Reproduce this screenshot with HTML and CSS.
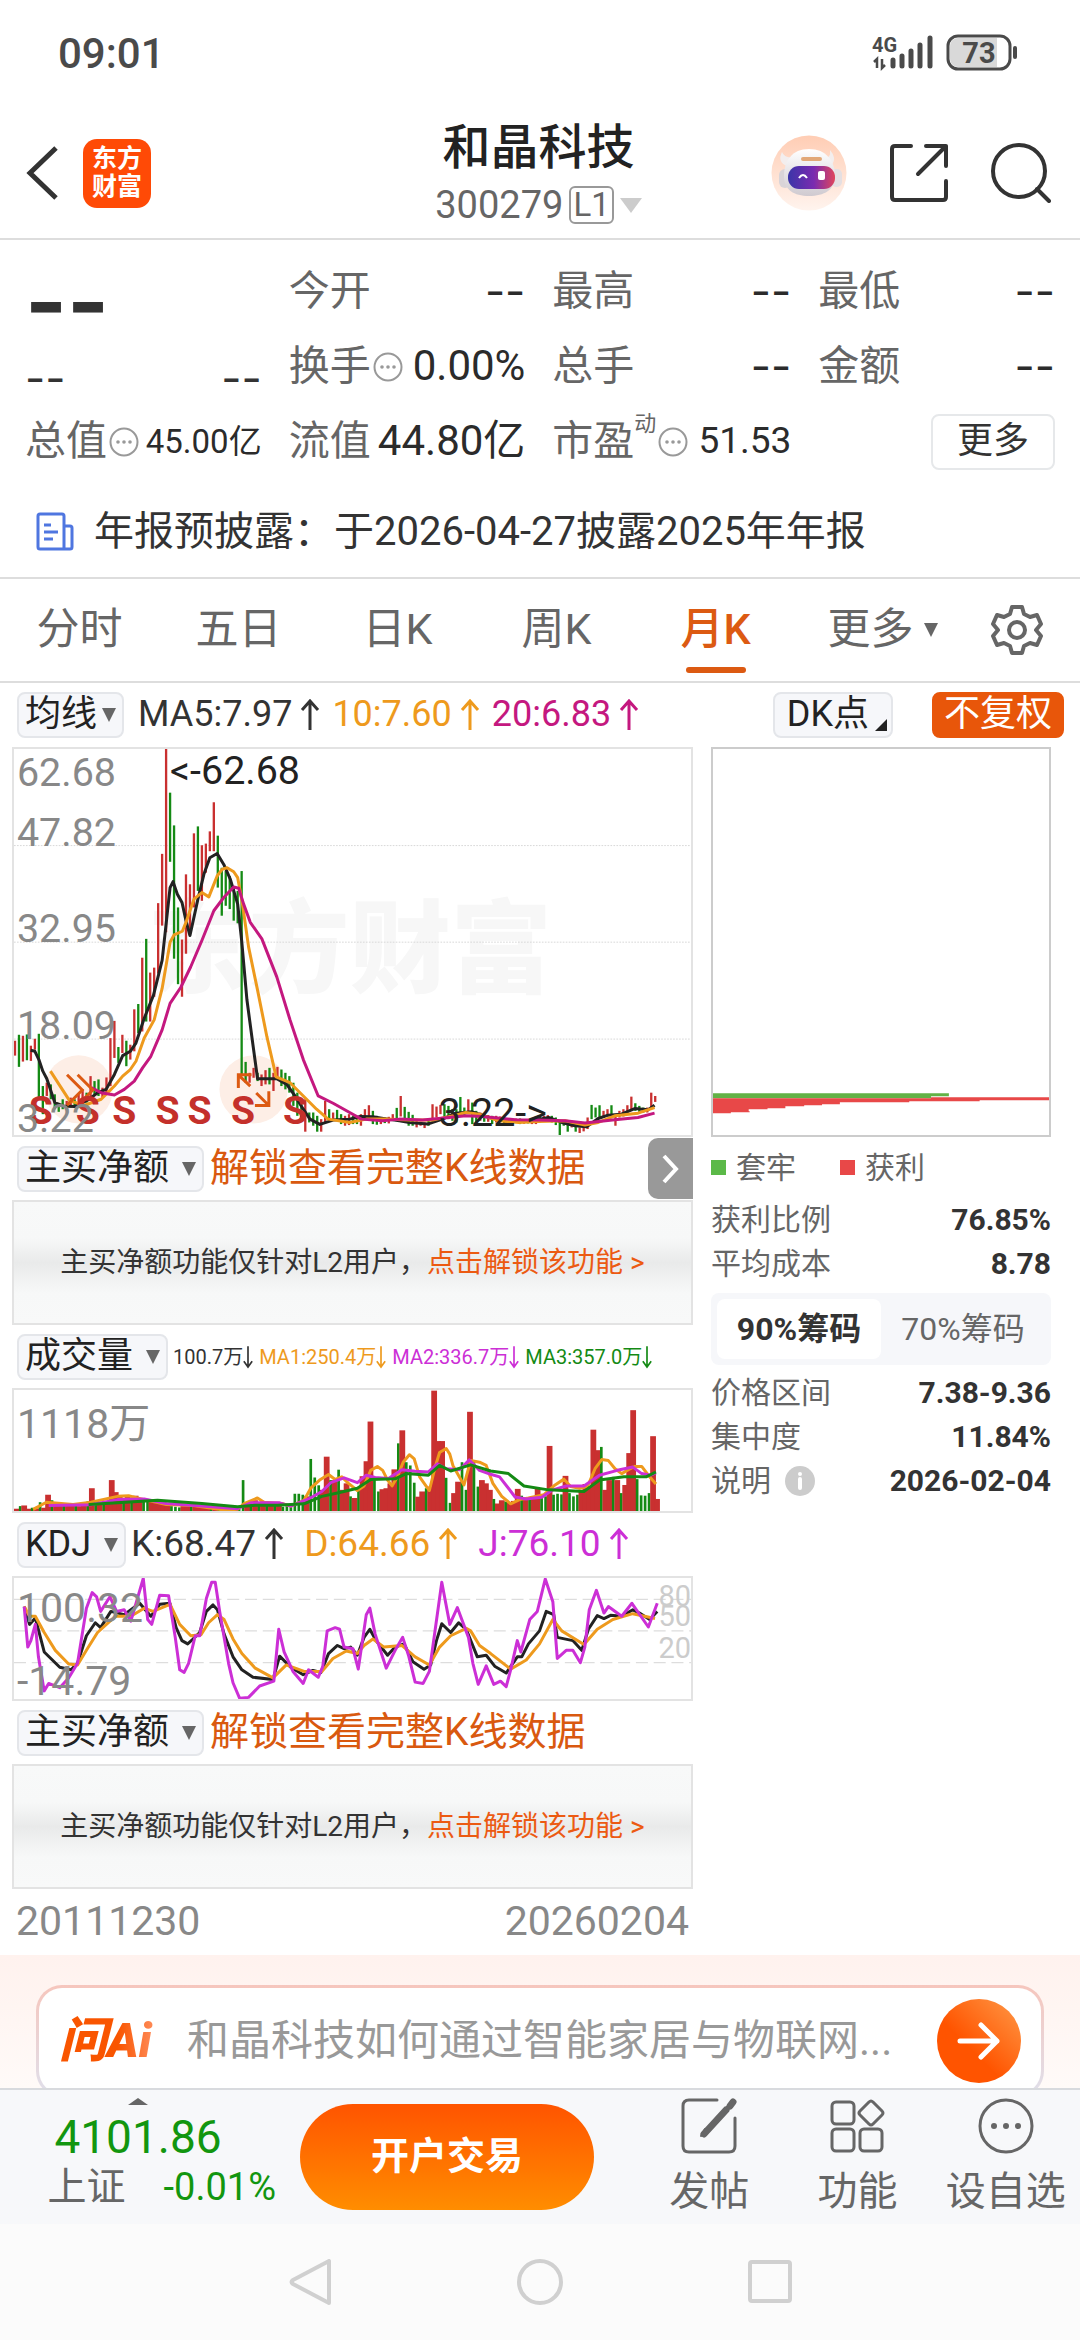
FILE: index.html
```html
<!DOCTYPE html>
<html lang="zh-CN">
<head>
    <meta charset="UTF-8">
    <meta name="viewport" content="width=device-width, initial-scale=1.0">
    <title>和晶科技 300279</title>
    <link rel="stylesheet" href="styles.css">
</head>
<body>
    <div class="statusbar">
        <span class="clock">09:01</span>
        <svg class="status-icons" width="150" height="40" viewBox="0 0 150 40">
            <text x="0" y="18" class="net">4G</text>
            <path d="M5 34V25l-3 3M10 25v9l3-3" fill="none" stroke="#4a4a4a" stroke-width="2.5"/>
            <path d="M21 32v-6M30 32v-10M39 32V17M48 32V11M58 32V4" stroke="#4a4a4a" stroke-width="5" stroke-linecap="round"/>
            <rect x="76" y="2" width="62" height="33" rx="10" fill="#fff" stroke="#4a4a4a" stroke-width="3"/>
            <path d="M86 4h39v29H86a8 8 0 0 1-8-8V12a8 8 0 0 1 8-8z" fill="#d9d9d9"/>
            <path d="M143 14v9" stroke="#4a4a4a" stroke-width="4" stroke-linecap="round"/>
            <text x="107" y="29" text-anchor="middle" class="bat">73</text>
        </svg>
    </div>

    <header class="header">
        <div class="header-left">
            <button class="icon-btn" aria-label="返回">
                <svg width="34" height="58" viewBox="0 0 34 58"><path d="M30 4L4 29l26 25" fill="none" stroke="#333" stroke-width="5"/></svg>
            </button>
            <div class="brand">东方<br>财富</div>
        </div>
        <div class="header-title">
            <h1>和晶科技</h1>
            <div class="code">300279<span class="level">L1</span><span class="tri tri-lg"></span></div>
        </div>
        <div class="header-right">
            <button class="icon-btn" aria-label="智能助手">
                <svg width="76" height="76" viewBox="0 0 76 76">
                    <defs>
                        <linearGradient id="halo" x1="0" y1="0" x2="0" y2="1"><stop offset="0" stop-color="#ffcdb4"/><stop offset="1" stop-color="#fff4ee"/></linearGradient>
                        <linearGradient id="visor" x1="0" y1="0" x2="1" y2="0"><stop offset="0" stop-color="#3b35a8"/><stop offset=".55" stop-color="#7a2bb0"/><stop offset="1" stop-color="#e0455c"/></linearGradient>
                        <linearGradient id="shell" x1="0" y1="0" x2="0" y2="1"><stop offset="0" stop-color="#fff"/><stop offset="1" stop-color="#cfcad0"/></linearGradient>
                    </defs>
                    <circle cx="38" cy="38" r="37.500" fill="url(#halo)"/>
                    <path d="M11 17q-5 10 5 14l7-9q-9 2-12-5zM59 15q7 8 2 15l-7-7q6 0 5-8z" fill="#f3eeee"/>
                    <rect x="8" y="34" width="12" height="19" rx="6" fill="#d9d4d8"/><rect x="60" y="34" width="11" height="18" rx="5" fill="#e4dfe2"/>
                    <path d="M38 14c17 0 26 12 26 27 0 14-11 20-26 20S13 55 13 41c0-15 8-27 25-27z" fill="url(#shell)"/>
                    <rect x="30" y="22" width="21" height="4" rx="2" fill="#e2a878"/>
                    <rect x="17" y="31" width="47" height="23" rx="11" fill="url(#visor)"/>
                    <path d="M28 43q4-6 8 0" fill="none" stroke="#fff" stroke-width="2"/>
                    <rect x="47" y="36" width="7" height="9" rx="2" fill="#fff"/>
                </svg>
            </button>
            <button class="icon-btn" aria-label="分享">
                <svg width="60" height="60" viewBox="0 0 60 60" fill="none" stroke="#333" stroke-width="4" stroke-linecap="round" stroke-linejoin="round"><path d="M22 3H6q-3 0-3 3v48q0 3 3 3h48q3 0 3-3V38M37 3h20v20M57 3L29 31"/></svg>
            </button>
            <button class="icon-btn" aria-label="搜索">
                <svg width="60" height="60" viewBox="0 0 60 60" fill="none" stroke="#333" stroke-width="4" stroke-linecap="round"><circle cx="28" cy="28" r="26"/><path d="M46 46l12 12"/></svg>
            </button>
        </div>
    </header>

    <section class="quote">
        <div class="quote-grid">
            <div class="cell price"><span class="dash">--</span></div>
            <div class="cell"><span class="k">今开</span><span class="v dash">--</span></div>
            <div class="cell"><span class="k">最高</span><span class="v dash">--</span></div>
            <div class="cell"><span class="k">最低</span><span class="v dash">--</span></div>

            <div class="cell change"><span class="dash">--</span><span class="dash">--</span></div>
            <div class="cell"><span class="k">换手</span><svg class="more-dot"><use href="#dots"/></svg><span class="v">0.00%</span></div>
            <div class="cell"><span class="k">总手</span><span class="v dash">--</span></div>
            <div class="cell"><span class="k">金额</span><span class="v dash">--</span></div>

            <div class="cell"><span class="k">总值</span><svg class="more-dot"><use href="#dots"/></svg><span class="v v-sm">45.00亿</span></div>
            <div class="cell"><span class="k">流值</span><span class="v">44.80亿</span></div>
            <div class="cell"><span class="k">市盈<sup>动</sup></span><svg class="more-dot"><use href="#dots"/></svg><span class="v v-md">51.53</span></div>
            <div class="cell cell-end"><button class="more-btn">更多</button></div>
        </div>
        <a class="notice" href="#">
            <svg width="38" height="40" viewBox="0 0 38 40" fill="none" stroke="#4f76e0" stroke-width="3" stroke-linejoin="round"><path d="M28 37H4q-2 0-2-2V4q0-2 2-2h22q2 0 2 2zM28 14h6q2 0 2 2v19q0 2-2 2h-6zM8 13h7M8 20h14M8 27h9"/></svg>
            <span>年报预披露：于2026-04-27披露2025年年报</span>
        </a>
    </section>

    <nav class="tabs">
        <button>分时</button>
        <button>五日</button>
        <button>日K</button>
        <button>周K</button>
        <button class="active">月K</button>
        <button>更多<span class="tri"></span></button>
        <button aria-label="设置">
            <svg width="52" height="52" viewBox="0 0 52 52" fill="none" stroke="#666" stroke-width="4" stroke-linejoin="round"><path d="M21 3h10l2 7 6 3 7-2 4 9-5 6 5 6-4 9-7-2-6 3-2 7H21l-2-7-6-3-7 2-4-9 5-6-5-6 4-9 7 2 6-3z"/><circle cx="26" cy="26" r="8"/></svg>
        </button>
    </nav>

    <div class="toolbar">
        <label class="picker"><select aria-label="主图指标"><option>均线</option></select><span class="tri"></span></label>
        <div class="legend">
            <span>MA5:7.97<svg class="arr"><use href="#up"/></svg></span>
            <span class="c-orange">10:7.60<svg class="arr"><use href="#up"/></svg></span>
            <span class="c-pink">20:6.83<svg class="arr"><use href="#up"/></svg></span>
        </div>
        <button class="chip">DK点<span class="corner"></span></button>
        <button class="chip chip-on">不复权</button>
    </div>

    <main class="charts">
        <div class="chart-col">
            <div class="plot plot-main">
                <svg id="kline" viewBox="37 21 2043 1167" preserveAspectRatio="none">
                    <text x="440" y="735" class="watermark">东方财富</text>
                    <g class="grid"><path d="M37 313H2080M37 605H2080M37 898H2080"/></g>
                    <circle cx="232" cy="1050" r="103" fill="#fdeee6"/>
                    <circle cx="760" cy="1050" r="103" fill="#fdeee6"/>
                    <g id="candles"></g>
                    <g id="maLines"></g>
                    <g class="signal">
                        <path d="M197 1006l46 46-46 46M229 1006l46 46-46 46"/>
                        <path d="M714 1046v-40h40M714 1006l36 34M806 1056v43h-42M806 1099l-38-38"/>
                    </g>
                    <g class="sell">
                        <text x="118" y="1154">S</text><text x="260" y="1154">S</text><text x="370" y="1154">S</text>
                        <text x="500" y="1154">S</text><text x="597" y="1154">S</text><text x="728" y="1154">S</text><text x="885" y="1154">S</text>
                    </g>
                    <g class="axis">
                        <text x="46" y="134">62.68</text><text x="46" y="315">47.82</text><text x="46" y="605">32.95</text>
                        <text x="46" y="899">18.09</text><text x="46" y="1178">3.22</text>
                    </g>
                    <g class="mark"><text x="508" y="128">&lt;-62.68</text><text x="1318" y="1162">3.22-&gt;</text></g>
                </svg>
            </div>
            <div class="row">
                <label class="picker"><select aria-label="副图一指标"><option>主买净额</option></select><span class="tri"></span></label>
                <a class="unlock" href="#">解锁查看完整K线数据</a>
                <button class="expand" aria-label="收起筹码"><svg width="20" height="32" viewBox="0 0 20 32"><path d="M3 3l12 13L3 29" fill="none" stroke="#fff" stroke-width="4"/></svg></button>
            </div>
            <div class="plot locked">主买净额功能仅针对L2用户，<a href="#">点击解锁该功能 &gt;</a></div>
            <div class="row">
                <label class="picker"><select aria-label="副图二指标"><option>成交量</option></select><span class="tri"></span></label>
                <div class="legend legend-vol">
                    <span>100.7万<svg class="arr"><use href="#down"/></svg></span>
                    <span class="c-orange">MA1:250.4万<svg class="arr"><use href="#down"/></svg></span>
                    <span class="c-magenta">MA2:336.7万<svg class="arr"><use href="#down"/></svg></span>
                    <span class="c-green">MA3:357.0万<svg class="arr"><use href="#down"/></svg></span>
                </div>
            </div>
            <div class="plot plot-sub">
                <svg id="volume" viewBox="27 23 1524 372" preserveAspectRatio="none">
                    <g id="volBars"></g>
                    <g id="volLines"></g>
                </svg>
                <span class="tag tag-vol">1118万</span>
            </div>
            <div class="row">
                <label class="picker"><select aria-label="副图三指标"><option>KDJ</option></select><span class="tri"></span></label>
                <div class="legend legend-kdj">
                    <span>K:68.47<svg class="arr"><use href="#up"/></svg></span>
                    <span class="c-orange">D:64.66<svg class="arr"><use href="#up"/></svg></span>
                    <span class="c-magenta">J:76.10<svg class="arr"><use href="#up"/></svg></span>
                </div>
            </div>
            <div class="plot plot-sub">
                <svg id="kdj" viewBox="27 587 1524 373" preserveAspectRatio="none">
                    <g class="grid-dash"><path d="M27 653H1551M27 750H1551M27 848H1551"/></g>
                    <g id="kdjLines"></g>
                </svg>
                <span class="tag tag-hi">100.32</span>
                <span class="tag tag-lo">-14.79</span>
                <div class="levels"><span>80</span><span>50</span><span>20</span></div>
            </div>
            <div class="row">
                <label class="picker"><select aria-label="副图四指标"><option>主买净额</option></select><span class="tri"></span></label>
                <a class="unlock" href="#">解锁查看完整K线数据</a>
            </div>
            <div class="plot locked">主买净额功能仅针对L2用户，<a href="#">点击解锁该功能 &gt;</a></div>
            <div class="dates"><span>20111230</span><span>20260204</span></div>
        </div>

        <aside class="chips">
            <div class="plot plot-chips">
                <svg viewBox="0 0 339 389" preserveAspectRatio="none">
                    <path d="M0 347h238v3h-18v2H0z" fill="#62b246"/>
                    <path d="M0 352h220v-1h119v3h-70v1h-71v1h-70v2h-18v1h-18v1h-19v2h-18v1h-19v2H37v1H18v1H0z" fill="#e84848"/>
                </svg>
            </div>
            <div class="chips-legend"><span><i class="sq sq-green"></i>套牢</span><span><i class="sq sq-red"></i>获利</span></div>
            <dl>
                <div><dt>获利比例</dt><dd>76.85%</dd></div>
                <div><dt>平均成本</dt><dd>8.78</dd></div>
            </dl>
            <div class="segment"><button class="on">90%筹码</button><button>70%筹码</button></div>
            <dl>
                <div><dt>价格区间</dt><dd>7.38-9.36</dd></div>
                <div><dt>集中度</dt><dd>11.84%</dd></div>
                <div><dt>说明<svg width="30" height="30" viewBox="0 0 30 30"><circle cx="15" cy="15" r="15" fill="#ccc"/><path d="M15 13v9" stroke="#fff" stroke-width="4" stroke-linecap="round"/><circle cx="15" cy="8" r="2" fill="#fff"/></svg></dt><dd>2026-02-04</dd></div>
            </dl>
        </aside>
    </main>

    <section class="ask">
        <form class="ask-card">
            <label class="ask-logo" for="ask">问Ai</label>
            <input id="ask" type="text" placeholder="和晶科技如何通过智能家居与物联网...">
            <button class="ask-go" type="button" aria-label="提问">
                <svg width="44" height="40" viewBox="0 0 44 40" fill="none" stroke="#fff" stroke-width="5" stroke-linecap="round" stroke-linejoin="round"><path d="M3 20h37M24 4l16 16-16 16"/></svg>
            </button>
        </form>
    </section>

    <footer class="bottombar">
        <div class="index">
            <span class="tri-up"></span>
            <span class="index-val">4101.86</span>
            <span class="index-name">上证<b>-0.01%</b></span>
        </div>
        <button class="trade">开户交易</button>
        <button class="action">
            <svg width="56" height="56" viewBox="0 0 56 56" fill="none" stroke="#666" stroke-width="3" stroke-linecap="round"><path d="M36 2H8q-6 0-6 6v40q0 6 6 6h40q6 0 6-6V20"/><path d="M23 36l22-24M49 8l3-4" stroke-width="7"/><path d="M20 38l4-7" stroke-width="2"/></svg>
            发帖
        </button>
        <button class="action">
            <svg width="56" height="56" viewBox="0 0 56 56" fill="none" stroke="#666" stroke-width="3"><rect x="3" y="4" width="22" height="22" rx="4"/><rect x="3" y="31" width="22" height="22" rx="4"/><rect x="31" y="31" width="22" height="22" rx="4"/><path d="M40 4q2-2 4 0l9 9q2 2 0 4l-9 9q-2 2-4 0l-9-9q-2-2 0-4z"/></svg>
            功能
        </button>
        <button class="action">
            <svg width="56" height="56" viewBox="0 0 56 56"><circle cx="28" cy="28" r="26" fill="none" stroke="#666" stroke-width="3"/><g fill="#666"><circle cx="16" cy="28" r="3"/><circle cx="28" cy="28" r="3"/><circle cx="40" cy="28" r="3"/></g></svg>
            设自选
        </button>
    </footer>

    <div class="sysnav">
        <svg width="44" height="46" viewBox="0 0 44 46"><path d="M41 2v42L5 25q-3-2 0-4z"/></svg>
        <svg width="46" height="46" viewBox="0 0 46 46"><circle cx="23" cy="23" r="21"/></svg>
        <svg width="44" height="46" viewBox="0 0 44 46"><rect x="2" y="3" width="40" height="39" rx="2"/></svg>
    </div>

    <svg width="0" height="0" class="defs">
        <symbol id="dots" viewBox="0 0 30 30"><circle cx="15" cy="15" r="13.500" fill="none" stroke="#999" stroke-width="2"/><g fill="#999"><circle cx="9" cy="15" r="1.800"/><circle cx="15" cy="15" r="1.800"/><circle cx="21" cy="15" r="1.800"/></g></symbol>
        <symbol id="up" viewBox="0 0 20 32"><path d="M10 31V2M2 11l8-9 8 9" fill="none" stroke="currentColor" stroke-width="3"/></symbol>
        <symbol id="down" viewBox="0 0 12 28"><path d="M6 1v25M1 19l5 7 5-7" fill="none" stroke="currentColor" stroke-width="2"/></symbol>
    </svg>

    <script src="chart.js"></script>
</body>
</html>
```

FILE: styles.css
```css
* { box-sizing: border-box; }
body {
    margin: 0;
    min-height: 100vh;
    display: flex;
    flex-direction: column;
    background: #fff;
    color: #333;
    font-family: Roboto, "Noto Sans CJK SC", sans-serif;
    font-size: 36px;
    line-height: 1.2;
}
button, input, select { font: inherit; color: inherit; border: 0; background: none; padding: 0; margin: 0; }
a { color: inherit; text-decoration: none; }
svg { display: block; flex: none; }
.defs { position: absolute; }
.c-orange { color: #ee9a1d; }
.c-pink { color: #c4187f; }
.c-magenta { color: #cc2fd6; }
.c-green { color: #148a14; }
.dash { font-family: Inter, sans-serif; }
.arr { width: 20px; height: 32px; }
.tri { display: inline-block; border: 7px solid transparent; border-top: 14px solid #666; border-bottom: 0; }
.tri-lg { border-width: 11px; border-top: 15px solid #ccc; border-bottom: 0; }

/* status bar */
.statusbar { height: 108px; padding: 0 58px; display: flex; align-items: center; justify-content: space-between; color: #4a4a4a; }
.status-icons { overflow: visible; }
.clock { font-size: 42px; font-weight: 500; }
.net { font-size: 20px; font-weight: 700; fill: #4a4a4a; }
.bat { font-size: 29px; font-weight: 700; fill: #4a4a4a; }

/* header */
.header { height: 132px; padding: 0 29px 0 26px; display: grid; grid-template-columns: 1fr auto 1fr; align-items: center; border-bottom: 2px solid #ddd; }
.header-left { display: flex; align-items: center; gap: 23px; }
.brand { width: 68px; height: 69px; border-radius: 14px; background: #ff4a06; color: #fff; font-size: 25px; line-height: 28px; font-weight: 700; text-align: center; padding-top: 6px; }
.header-title { text-align: center; padding-top: 4px; }
.header-title h1 { margin: 0; font-size: 48px; line-height: 60px; font-weight: 500; color: #222; }
.code { display: flex; align-items: center; justify-content: center; gap: 6px; font-size: 38px; line-height: 54px; color: #666; }
.level { border: 2px solid #999; border-radius: 6px; font-size: 33px; line-height: 34px; padding: 0 2px; }
.header-right { display: flex; align-items: center; justify-content: flex-end; gap: 42px; }

/* quote */
.quote { border-bottom: 2px solid #ddd; padding-top: 14px; }
.quote-grid { display: grid; grid-template-columns: repeat(4, 1fr); grid-auto-rows: 75px; column-gap: 27px; padding: 0 25px; }
.cell { display: flex; align-items: center; white-space: nowrap; }
.k { font-size: 41px; color: #666; }
.k sup { font-size: 22px; line-height: 0; vertical-align: 24px; }
.v { margin-left: auto; font-size: 42px; color: #2b2b2b; }
.v.dash { font-size: 44px; }
.v-sm { font-size: 33px; }
.v-md { font-size: 37px; margin-left: 10px; }
.more-dot { width: 30px; height: 30px; margin-left: 2px; }
.price { font-size: 90px; font-weight: 700; padding-top: 20px; }
.change { justify-content: space-between; font-size: 44px; padding-top: 24px; }
.cell-end { justify-content: flex-end; }
.more-btn { width: 124px; height: 56px; border: 2px solid #e6e8ea; border-radius: 8px; font-size: 36px; }
.notice { height: 98px; padding: 8px 36px 0; display: flex; align-items: center; gap: 20px; font-size: 40px; }

/* tabs */
.tabs { height: 104px; padding-right: 16px; display: grid; grid-template-columns: repeat(5, 159fr) 175fr 94fr; border-bottom: 2px solid #ddd; color: #666; font-size: 43px; }
.tabs button { display: flex; align-items: center; justify-content: center; gap: 10px; position: relative; }
.tabs .active { color: #dc5a12; font-weight: 500; }
.tabs .active::after { content: ""; position: absolute; left: 50%; bottom: 8px; width: 60px; height: 6px; margin-left: -30px; border-radius: 3px; background: #dc5a12; }

/* indicator rows */
.toolbar { height: 64px; display: flex; align-items: center; padding: 0 16px 0 17px; }
.row { height: 63px; display: flex; align-items: center; padding-left: 5px; }
.picker, .chip { display: flex; align-items: center; gap: 6px; height: 46px; border: 2px solid #e4e6ea; border-radius: 8px; background: #f6f7fa; white-space: nowrap; }
.picker { padding: 0 6px; color: #222; gap: 12px; }
.toolbar .picker { gap: 4px; }
.picker select { appearance: none; }
.legend { display: flex; gap: 12px; margin-left: 14px; white-space: nowrap; }
.legend span { display: flex; align-items: center; gap: 8px; }
.toolbar .legend { margin-right: auto; }
.row .legend { margin-left: 5px; }
.row .legend-kdj { gap: 20px; font-size: 37px; }
.row .legend-vol { gap: 6px; font-size: 20px; }
.legend-vol span { gap: 0; }
.legend-vol .arr { width: 10px; height: 24px; }
.chip { padding: 0 4px 0 12px; margin-right: 39px; color: #222; }
.corner { border-left: 12px solid transparent; border-bottom: 12px solid #222; align-self: flex-end; margin-bottom: 5px; }
.chip-on { margin: 0; padding: 0 10px; background: #e8560a; border-color: #e8560a; color: #fff; }
.unlock { margin-left: 6px; font-size: 39px; color: #d9590f; white-space: nowrap; }
.expand { width: 45px; height: 61px; margin-left: auto; border-radius: 10px 0 0 10px; background: #999; display: flex; align-items: center; justify-content: center; }

/* charts */
.charts { display: grid; grid-template-columns: minmax(0, 681fr) minmax(0, 340fr); column-gap: 18px; padding: 0 29px 0 12px; }
.plot { position: relative; border: 2px solid #e3e3e3; overflow: hidden; }
.plot > svg { width: 100%; height: 100%; }
.plot-main, .plot-chips { height: 390px; }
.plot-chips { border-color: #ccc; }
.plot-sub { height: 125px; }
.locked { height: 125px; display: flex; align-items: center; justify-content: center; font-size: 28px; white-space: nowrap; background: linear-gradient(#f8f9f9, #f7f8f8 30%, #e9eaea 50%, #f7f8f8 75%, #f8f9f9); }
.locked a { color: #ec5a12; }
.up { stroke: #c93030; fill: #c93030; }
.down { stroke: #148a14; fill: #148a14; }
#volBars { stroke: none; }
#volBars rect { stroke: none; }
.line { fill: none; stroke-width: 3px; stroke-linejoin: round; vector-effect: non-scaling-stroke; }
.l-black { stroke: #222; }
.l-orange { stroke: #ee9a1d; }
.l-pink { stroke: #c4187f; }
.l-magenta { stroke: #cc2fd6; }
.l-green { stroke: #148a14; }
.grid { stroke: #d8d8d8; stroke-width: 3; stroke-dasharray: 5 4; }
.grid-dash { stroke: #ddd; stroke-width: 4; stroke-dasharray: 27 13; }
.watermark { font-size: 305px; font-weight: 900; fill: #f7f7f7; }
.axis { font-size: 119px; fill: #888; }
.mark { font-size: 119px; fill: #222; }
.sell { font-size: 118px; font-weight: 700; fill: #c4302b; text-anchor: middle; }
.signal { fill: none; stroke: #dc5a12; stroke-width: 9; }
.tag { position: absolute; left: 3px; font-size: 41px; line-height: 40px; color: #888; }
.tag-vol { top: 14px; }
.tag-hi { top: 10px; }
.tag-lo { bottom: -2px; }
.levels { position: absolute; right: 0; top: 6px; display: flex; flex-direction: column; padding-top: 2px; font-size: 29px; line-height: 20px; color: #ccc; }
.levels span:last-child { margin-top: 12px; }
.dates { height: 66px; padding: 0 4px; display: flex; align-items: center; justify-content: space-between; font-size: 41px; color: #888; }

/* chip distribution */
.chips { color: #666; font-size: 30px; }
.chips-legend { display: flex; gap: 44px; height: 61px; align-items: center; }
.chips-legend span { display: flex; align-items: center; gap: 10px; }
.sq { width: 15px; height: 15px; }
.sq-green { background: #5bb948; }
.sq-red { background: #e84848; }
.chips dl { margin: 0; }
.chips dl div { height: 44px; display: flex; align-items: center; justify-content: space-between; }
.chips dt { display: flex; align-items: center; gap: 14px; }
.chips dd { margin: 0; font-weight: 700; color: #333; }
.segment { display: flex; height: 72px; margin: 7px 0 6px; padding: 6px; border-radius: 8px; background: #f6f7fa; font-size: 32px; }
.segment button { flex: 1; border-radius: 8px; white-space: nowrap; }
.segment .on { background: #fff; color: #333; font-weight: 700; }

/* ask ai */
.ask { height: 133px; padding: 30px 36px 0; overflow: hidden; background: linear-gradient(#fff2ee, #fffaf8); }
.ask-card { height: 112px; display: flex; align-items: center; padding: 0 20px; border: 3px solid transparent; border-radius: 26px; background: linear-gradient(#fff, #fff) padding-box, linear-gradient(#f6c6bd, #dfe0ec) border-box; }
.ask-logo { width: 98px; font-size: 48px; font-weight: 900; font-style: italic; white-space: nowrap; color: transparent; background: linear-gradient(90deg, #f95500 60%, #ff9060); background-clip: text; }
.ask-card input { flex: 1; min-width: 0; margin-left: 30px; font-size: 42px; }
.ask-card input::placeholder { color: #999; }
.ask-go { width: 84px; height: 84px; border-radius: 50%; background: linear-gradient(225deg, #ff9a48, #ff5400 60%); display: flex; align-items: center; justify-content: center; }

/* bottom bar */
.bottombar { height: 136px; display: flex; align-items: center; border-top: 2px solid #d8dade; background: #f7f8fa; color: #666; }
.index { width: 300px; display: flex; flex-direction: column; align-items: center; padding: 0 24px 8px 0; }
.tri-up { border: 10px solid transparent; border-bottom: 7px solid #666; border-top: 0; }
.index-val { font-size: 46px; line-height: 56px; color: #12960f; margin-top: 4px; }
.index-name { font-size: 39px; line-height: 44px; align-self: flex-end; display: flex; align-items: center; gap: 38px; }
.index-name b { font-size: 38px; font-weight: 400; color: #12960f; }
.trade { width: 294px; height: 106px; border-radius: 53px; background: linear-gradient(#ff5400, #ff8d00); color: #fff; font-size: 38px; font-weight: 700; margin-right: 41px; }
.action { flex: 1; display: flex; flex-direction: column; align-items: center; gap: 14px; font-size: 40px; line-height: 48px; white-space: nowrap; }
.sysnav { flex: 1; min-height: 116px; display: flex; align-items: center; justify-content: center; gap: 185px; background: #fbfbfb; }
.sysnav svg { fill: none; stroke: #d0d0d0; stroke-width: 4; stroke-linejoin: round; }
```

FILE: chart.js
```js
// monthly candles: direction, high, low
const candles = `r903-948 g885-982 r888-966 g884-962 r918-964 r897-930 g882-1080 g1040-1125 r1030-1070 g1035-1080 g1065-1110 g1091-1118
g1080-1110 r1085-1110 r1075-1105 g1080-1105 r1065-1100 r1050-1095 g1060-1090 r1010-1085 g1025-1065 g1020-1070 r1045-1075 r1014-1065
r895-1040 r843-955 g922-970 r885-940 g903-980 r915-960 r808-935 g792-880 r652-875 g595-845 r697-845 r682-770
r487-700 r338-555 r21-575 g153-362 g252-655 g500-732 r597-770 r400-640 r430-580 r276-500 g255-450 r312-480
r307-395 r270-330 r182-330 g283-440 g380-525 g390-495 g405-505 g440-540 g450-548 g390-1010 g967-1030 r1000-1030
r985-1015 g1000-1025 r1005-1040 r992-1035 g985-1035 r1000-1055 r982-1020 g990-1040 g1000-1050 g1010-1060 g1030-1100 g1060-1130
g1090-1135 r1080-1178 g1120-1150 g1120-1160 g1130-1178 r1140-1178 r1085-1150 g1110-1140 r1120-1145 g1112-1145 g1125-1155 r1130-1160
r1125-1158 g1130-1155 g1132-1155 r1125-1160 r1110-1140 r1098-1135 g1115-1155 g1130-1157 r1135-1155 g1135-1152 r1133-1153 r1125-1145
g1106-1140 r1070-1132 g1103-1140 g1118-1160 g1127-1160 r1140-1165 r1148-1160 r1150-1167 g1140-1160 r1095-1140 r1102-1135 r1097-1125
g1095-1135 g1100-1140 g1110-1145 g1110-1150 g1073-1125 g1105-1130 r1080-1118 g1090-1155 g1115-1150 r1120-1145 g1125-1148 r1128-1148
g1130-1155 r1130-1150 r1132-1150 g1135-1152 r1138-1155 g1140-1156 r1138-1152 g1138-1155 r1140-1154 g1140-1153 r1140-1155 r1135-1155
g1130-1150 r1130-1148 r1128-1145 g1130-1150 g1135-1158 g1150-1190 g1150-1160 g1150-1178 r1150-1165 g1155-1178 r1165-1182 r1160-1177
r1135-1170 g1097-1140 g1105-1135 g1098-1138 r1115-1135 r1110-1130 g1098-1130 r1127-1160 r1115-1135 r1110-1132 r1098-1125 r1072-1110
g1092-1115 g1100-1118 g1105-1120 r1105-1120 r1060-1105 r1070-1088`.split(/\s+/);

const volumes = `r388 g380 r378 r388 g385 r387 g368 r385 r345 g362 r372 r378 g375 r372 r378 g378 r380 r378 g365 r325 g372 r370 g372 r372 r300 r337
r350 g360 r352 g362 r348 r355 g362 g358 r365 r370 r372 r374 r376 g380 g382 g384 r378 r378 g380 r380 r380 r382 r382 g382 r384 g386 r388 r388
g388 r388 g386 g300 r378 g370 r362 g368 r366 g374 r372 g376 r370 g382 g380 g375 g342 g342 g345 r350 g235 g292 g316 r330 r228 g300 r300 g268
r330 r310 g350 r355 g330 r288 r242 r120 g300 g335 r328 r325 r310 r267 g187 r147 g245 g255 g308 r351 r335 g325 r320 r25 r180 r180
g293 g370 r340 r305 g245 g330 r90 g240 g320 r300 r310 r330 g358 r372 r362 g366 r370 r364 r327 g348 r355 g358 r352 r325 g352 g350
r195 g345 g342 g344 r287 g340 g350 g345 r330 r312 r320 r145 r208 g198 r330 r300 g290 r300 g340 r315 r217 r85 g297 g347 g348 g340 r165 r358`.split(/\s+/);

const maLines = {
    black: '87,932 100,935 112,960 124,995 136,1018 160,1090 185,1100 220,1102 260,1082 290,1060 315,1050 340,1005 365,948 388,935 405,910 430,835 458,765 484,660 508,440 517,422 530,460 544,485 556,540 568,585 592,475 610,400 628,350 650,337 670,370 690,415 712,490 724,600 740,780 756,900 772,1018 830,1018 860,1035 885,1070 910,1110 930,1140 960,1156 1000,1143 1050,1140 1082,1132 1120,1133 1165,1140 1200,1145 1230,1150 1285,1155 1330,1140 1370,1122 1420,1118 1470,1135 1530,1148 1600,1145 1650,1135 1690,1150 1730,1160 1765,1163 1800,1138 1830,1128 1870,1125 1910,1108 1950,1112 1970,1098',
    orange: '147,995 205,1085 250,1098 300,1080 340,1040 365,1010 388,990 405,965 430,895 460,840 484,745 508,605 520,583 545,572 556,545 580,475 604,455 625,468 650,405 665,385 680,380 700,392 712,410 725,480 745,620 772,750 800,890 828,1012 870,1030 910,1070 950,1110 985,1140 1050,1150 1100,1140 1160,1140 1230,1143 1300,1143 1370,1128 1400,1120 1440,1125 1500,1145 1560,1150 1620,1147 1700,1145 1760,1158 1800,1150 1850,1130 1920,1122 1970,1105',
    pink: '270,1045 300,1060 340,1067 370,1050 400,1025 425,985 450,950 484,870 508,790 540,742 570,680 604,600 640,510 670,470 700,438 715,442 730,490 750,545 785,595 830,710 870,840 910,960 955,1070 1000,1092 1050,1120 1085,1140 1150,1145 1200,1140 1270,1143 1350,1135 1400,1130 1450,1132 1550,1142 1620,1143 1700,1145 1760,1152 1850,1142 1920,1135 1970,1122'
};
const volLines = {
    orange: '70,390 100,368 160,375 200,368 260,350 285,348 320,360 370,375 430,378 500,392 530,390 545,372 575,355 590,368 630,372 650,380 680,362 695,325 715,300 735,283 750,298 765,290 780,310 800,332 815,318 830,270 845,258 857,270 868,300 878,318 890,290 903,245 917,222 928,235 940,290 962,332 975,260 985,215 1000,203 1008,220 1015,255 1040,315 1055,240 1075,245 1090,255 1105,310 1125,350 1145,373 1165,360 1185,355 1220,345 1245,315 1265,297 1280,320 1300,325 1318,320 1335,265 1350,237 1365,240 1380,265 1395,280 1410,268 1425,258 1440,258 1455,285 1472,312',
    magenta: '105,378 200,376 260,360 320,358 370,372 450,380 530,388 560,370 625,370 650,380 690,358 720,335 740,308 770,293 800,308 820,285 840,292 870,295 900,268 930,273 960,275 980,250 1000,265 1030,268 1052,238 1075,270 1100,282 1120,290 1140,325 1155,352 1180,358 1215,353 1240,330 1270,318 1310,318 1345,285 1385,270 1420,260 1440,280 1460,285 1472,278',
    green: '195,375 260,370 350,362 450,372 530,382 570,377 620,377 680,373 720,350 760,338 800,325 830,298 885,296 910,280 960,285 985,255 1010,272 1055,253 1100,272 1140,280 1175,318 1230,330 1310,335 1345,300 1400,290 1450,290 1472,275'
};
const kdjLines = {
    black: '50,675 62,730 75,710 95,815 130,862 155,870 170,850 190,765 210,725 222,740 245,690 275,700 310,665 335,705 355,668 378,665 392,740 405,780 418,790 430,775 445,755 460,690 475,670 485,685 500,760 520,830 540,870 565,893 610,900 625,828 650,862 678,885 700,872 718,878 735,820 755,795 770,805 785,800 800,825 815,770 828,745 842,780 868,825 885,800 905,790 925,845 950,868 965,855 978,780 990,728 1010,755 1028,725 1045,745 1070,830 1090,825 1110,860 1135,880 1160,830 1170,830 1185,790 1210,750 1225,690 1242,700 1250,770 1285,780 1305,810 1320,745 1340,703 1355,712 1370,702 1395,705 1420,685 1435,695 1458,715 1475,690',
    orange: '50,675 62,705 75,705 95,755 120,810 150,852 170,855 190,810 215,755 235,730 255,705 290,705 320,680 340,690 378,668 400,730 425,765 448,762 465,725 485,700 500,715 520,775 540,820 570,865 610,895 640,855 680,875 720,875 745,835 775,812 800,820 815,795 835,775 860,800 900,795 930,830 962,855 985,800 1010,765 1045,742 1055,750 1075,795 1100,820 1145,868 1180,840 1210,790 1240,715 1260,750 1310,792 1340,745 1375,715 1420,697 1470,712',
    magenta: '50,675 58,800 65,780 75,730 82,830 95,935 105,912 130,925 150,895 170,850 190,680 203,632 213,645 222,690 243,645 258,690 275,685 290,720 318,588 328,715 337,730 355,640 375,642 390,770 400,870 410,878 420,850 435,765 445,765 460,650 472,600 480,600 490,690 510,850 520,910 535,958 555,955 580,920 612,905 623,745 635,815 655,875 678,912 690,870 712,893 722,860 732,750 750,740 760,745 770,800 790,805 802,868 820,700 828,680 840,760 865,865 885,810 902,770 915,825 930,908 948,912 962,875 990,600 1008,730 1025,678 1050,770 1060,850 1072,915 1090,858 1107,915 1122,905 1135,922 1145,870 1160,780 1168,815 1188,715 1205,690 1223,590 1240,660 1250,835 1270,810 1285,810 1302,848 1312,800 1322,685 1338,625 1355,695 1365,675 1395,705 1418,665 1455,738 1475,665'
};

function cls(s) {
    return s[0] === 'r' ? 'up' : 'down';
}

function drawLines(id, lines) {
    document.getElementById(id).innerHTML = Object.keys(lines)
        .map(name => `<polyline class="line l-${name}" points="${lines[name]}"/>`).join('');
}

document.getElementById('candles').innerHTML = candles.map((c, i) => {
    const [hi, lo] = c.slice(1).split('-');
    return `<path class="${cls(c)}" stroke-width="7" d="M${40 + i * 12} ${hi}V${lo}"/>`;
}).join('');

document.getElementById('volBars').innerHTML = volumes.map((v, i) => {
    const top = Number(v.slice(1));
    const w = v[0] === 'r' ? 13 : 6;
    return `<rect class="${cls(v)}" x="${32 + i * 8.96 - w / 2}" y="${top}" width="${w}" height="${395 - top}"/>`;
}).join('');

drawLines('maLines', maLines);
drawLines('volLines', volLines);
drawLines('kdjLines', kdjLines);
```
